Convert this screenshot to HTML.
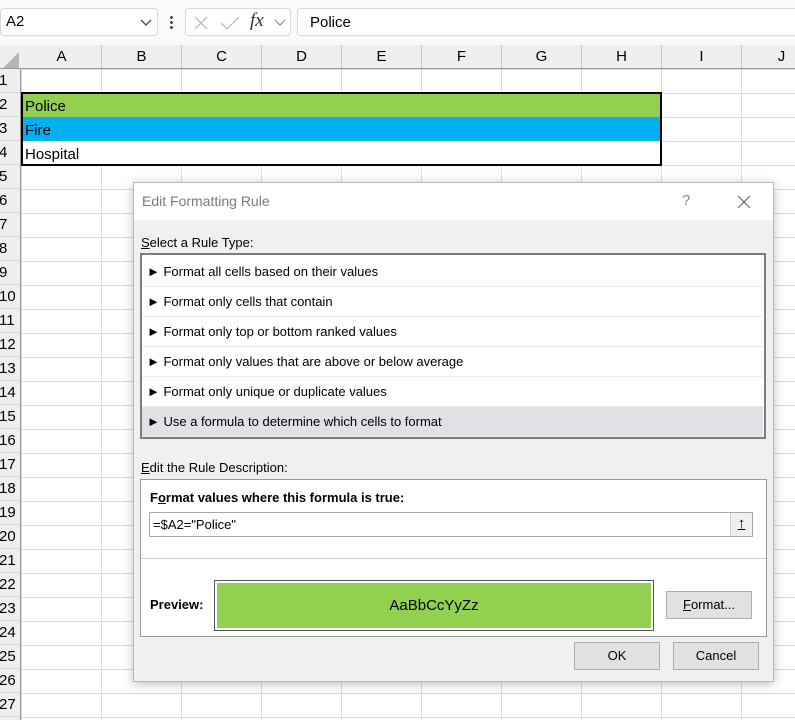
<!DOCTYPE html>
<html><head><style>
*{box-sizing:border-box;margin:0;padding:0}
body{width:795px;height:720px;position:relative;overflow:hidden;background:#fff;font-family:"Liberation Sans",sans-serif;color:#000}
.a{position:absolute}
.grid{left:21px;top:69px;width:774px;height:651px;
background-image:linear-gradient(to right,#dadada 1px,transparent 1px),linear-gradient(to bottom,#dadada 1px,transparent 1px);
background-size:80px 24px;background-position:0 0}
.colh{left:0;top:45px;width:795px;height:24px;background:#efefef;border-bottom:1px solid #9a9a9a}
.ch{position:absolute;top:0;height:23px;width:80px;text-align:center;font-size:15px;line-height:24px;border-right:1px solid #c8c8c8}
.rowh{left:0;top:69px;width:21px;height:651px;background:#efefef;border-right:1px solid #9a9a9a}
.rh{position:absolute;left:-1px;width:20px;height:24px;font-size:15px;line-height:24px;border-bottom:1px solid #d4d4d4}
.dlg{left:133px;top:182px;width:641px;height:500px;background:#f0f0f0;border:1px solid #b8b8b8;box-shadow:0 2px 10px rgba(0,0,0,.25);font-size:13px}
.item{position:absolute;left:0;width:621px;height:30px;line-height:30px;padding-left:5px;border-bottom:1px solid #eaeaea;font-size:13px}
.btn{position:absolute;background:#e1e1e1;border:1px solid #adadad;text-align:center;font-size:13px}
</style></head><body>
<div class="a" style="left:0;top:0;width:795px;height:45px;background:#fafafa"></div>
<div class="a" style="left:0;top:8px;width:158px;height:28px;background:#fff;border:1px solid #d8d8d8;border-radius:4px;font-size:15px;line-height:26px;padding-left:5px">A2
<svg class="a" style="left:139px;top:10px" width="12" height="8"><path d="M1 1L6 6L11 1" stroke="#444" fill="none" stroke-width="1.3"/></svg></div>
<div class="a" style="left:170px;top:15px;width:3px;height:14px;background:radial-gradient(circle,#444 1.3px,transparent 1.6px) 0 0/3px 5px"></div>
<div class="a" style="left:185px;top:8px;width:106px;height:28px;background:#fff;border:1px solid #d8d8d8;border-radius:4px">
<svg class="a" style="left:7px;top:6px" width="16" height="16"><path d="M2 2L14 14M14 2L2 14" stroke="#bbb" stroke-width="1.3"/></svg>
<svg class="a" style="left:33px;top:6px" width="22" height="16"><path d="M2 8L8 14L20 2" stroke="#bbb" fill="none" stroke-width="1.3"/></svg>
<span class="a" style="left:64px;top:1px;font-family:'Liberation Serif',serif;font-style:italic;font-size:19px;color:#333">fx</span>
<svg class="a" style="left:88px;top:10px" width="12" height="8"><path d="M1 1L6 6L11 1" stroke="#888" fill="none" stroke-width="1.2"/></svg></div>
<div class="a" style="left:297px;top:8px;width:510px;height:28px;background:#fff;border:1px solid #d8d8d8;border-radius:4px;font-size:15px;line-height:28px;padding-left:12px">Police</div>

<div class="a colh">
<svg class="a" style="left:3px;top:7px" width="16" height="16"><path d="M16 0L16 16L0 16Z" fill="#b5b5b5"/></svg>
<div class="ch" style="left:22px">A</div><div class="ch" style="left:102px">B</div><div class="ch" style="left:182px">C</div><div class="ch" style="left:262px">D</div><div class="ch" style="left:342px">E</div><div class="ch" style="left:422px">F</div><div class="ch" style="left:502px">G</div><div class="ch" style="left:582px">H</div><div class="ch" style="left:662px">I</div><div class="ch" style="left:742px">J</div>
</div>
<div class="a grid"></div>
<div class="a" style="left:22px;top:93px;width:639px;height:24px;background:#92d050"></div>
<div class="a" style="left:22px;top:117px;width:639px;height:24px;background:#00b0f0"></div>
<div class="a" style="left:22px;top:141px;width:639px;height:24px;background:#fff;border-right:1px solid #dadada"></div>
<div class="a" style="left:21px;top:92px;width:641px;height:74px;border:2px solid #000"></div>
<div class="a" style="left:25px;top:96px;font-size:15px;line-height:22px">Police</div>
<div class="a" style="left:25px;top:120px;font-size:15px;line-height:22px">Fire</div>
<div class="a" style="left:25px;top:144px;font-size:15px;line-height:22px">Hospital</div>

<div class="a rowh">
<div class="rh" style="top:0">1</div><div class="rh" style="top:24px">2</div><div class="rh" style="top:48px">3</div><div class="rh" style="top:72px">4</div><div class="rh" style="top:96px">5</div><div class="rh" style="top:120px">6</div><div class="rh" style="top:144px">7</div><div class="rh" style="top:168px">8</div><div class="rh" style="top:192px">9</div><div class="rh" style="top:216px">10</div><div class="rh" style="top:240px">11</div><div class="rh" style="top:264px">12</div><div class="rh" style="top:288px">13</div><div class="rh" style="top:312px">14</div><div class="rh" style="top:336px">15</div><div class="rh" style="top:360px">16</div><div class="rh" style="top:384px">17</div><div class="rh" style="top:408px">18</div><div class="rh" style="top:432px">19</div><div class="rh" style="top:456px">20</div><div class="rh" style="top:480px">21</div><div class="rh" style="top:504px">22</div><div class="rh" style="top:528px">23</div><div class="rh" style="top:552px">24</div><div class="rh" style="top:576px">25</div><div class="rh" style="top:600px">26</div><div class="rh" style="top:624px">27</div>
</div>

<div class="a dlg">
<div class="a" style="left:0;top:0;width:639px;height:37px;background:#fff"></div>
<div class="a" style="left:8px;top:10px;font-size:14px;color:#7a7a7a">Edit Formatting Rule</div>
<div class="a" style="left:548px;top:9px;font-size:15px;color:#888">?</div>
<svg class="a" style="left:603px;top:12px" width="14" height="14"><path d="M1 1L13 13M13 1L1 13" stroke="#666" stroke-width="1.2"/></svg>
<div class="a" style="left:7px;top:52px"><u>S</u>elect a Rule Type:</div>
<div class="a" style="left:6px;top:70px;width:626px;height:186px;background:#fff;border:2px solid #7d7d7d">
<div class="item" style="top:2px">► Format all cells based on their values</div>
<div class="item" style="top:32px">► Format only cells that contain</div>
<div class="item" style="top:62px">► Format only top or bottom ranked values</div>
<div class="item" style="top:92px">► Format only values that are above or below average</div>
<div class="item" style="top:122px">► Format only unique or duplicate values</div>
<div class="item" style="top:152px;background:#e0e0e5">► Use a formula to determine which cells to format</div>
</div>
<div class="a" style="left:7px;top:277px"><u>E</u>dit the Rule Description:</div>
<div class="a" style="left:6px;top:296px;width:627px;height:158px;background:#fff;border:1px solid #9a9a9a">
<div class="a" style="left:9px;top:10px;font-weight:bold">F<u>o</u>rmat values where this formula is true:</div>
<div class="a" style="left:8px;top:32px;width:604px;height:25px;border:1px solid #a8a8a8;padding-left:3px;line-height:23px">=$A2="Police"
<div class="a" style="right:0;top:0;width:22px;height:23px;background:#f0f0f0;border-left:1px solid #ccc;text-align:center;font-weight:bold;font-size:15px;line-height:22px;text-decoration:underline">&#x2191;</div></div>
<div class="a" style="left:0;top:78px;width:625px;height:1px;background:#ccc"></div>
<div class="a" style="left:9px;top:117px;font-weight:bold">Preview:</div>
<div class="a" style="left:73px;top:100px;width:440px;height:51px;border:1px solid #555;padding:2px"><div style="width:100%;height:100%;background:#92d050;text-align:center;line-height:45px;font-size:15px">AaBbCcYyZz</div></div>
<div class="btn" style="left:525px;top:111px;width:86px;height:28px;line-height:26px"><u>F</u>ormat...</div>
</div>
<div class="btn" style="left:440px;top:459px;width:86px;height:28px;line-height:26px">OK</div>
<div class="btn" style="left:539px;top:459px;width:86px;height:28px;line-height:26px">Cancel</div>
</div>
</body></html>
